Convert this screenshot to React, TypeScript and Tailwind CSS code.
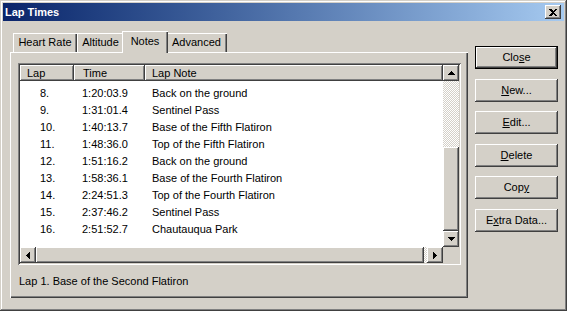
import React from "react";

const raised =
  "shadow-[inset_-1px_-1px_#404040,inset_1px_1px_#ffffff,inset_-2px_-2px_#808080,inset_2px_2px_#d4d0c8]";

const laps = [
  ["8.", "1:20:03.9", "Back on the ground"],
  ["9.", "1:31:01.4", "Sentinel Pass"],
  ["10.", "1:40:13.7", "Base of the Fifth Flatiron"],
  ["11.", "1:48:36.0", "Top of the Fifth Flatiron"],
  ["12.", "1:51:16.2", "Back on the ground"],
  ["13.", "1:58:36.1", "Base of the Fourth Flatiron"],
  ["14.", "2:24:51.3", "Top of the Fourth Flatiron"],
  ["15.", "2:37:46.2", "Sentinel Pass"],
  ["16.", "2:51:52.7", "Chautauqua Park"],
];

function Arrow({ dir }: { dir: "up" | "down" | "left" | "right" }) {
  const pts = {
    up: "3.5,0 7,4 0,4",
    down: "0,0 7,0 3.5,4",
    left: "4,0 4,7 0,3.5",
    right: "0,0 0,7 4,3.5",
  }[dir];
  const vertical = dir === "up" || dir === "down";
  return (
    <div className={`flex h-[16px] w-[16px] shrink-0 items-center justify-center bg-[#d4d0c8] ${raised}`}>
      <svg width={vertical ? 7 : 4} height={vertical ? 4 : 7} shapeRendering="crispEdges">
        <polygon points={pts} fill="#000" />
      </svg>
    </div>
  );
}

function Button({ label, u, def }: { label: string; u: number; def?: boolean }) {
  return (
    <div
      className={`flex h-[23px] w-[83px] items-center justify-center bg-[#d4d0c8] ${
        def
          ? "shadow-[inset_0_0_0_1px_#000000,inset_-2px_-2px_#404040,inset_2px_2px_#ffffff,inset_-3px_-3px_#808080]"
          : raised
      }`}
    >
      <span>
        {label.slice(0, u)}
        <span className="underline underline-offset-1">{label[u]}</span>
        {label.slice(u + 1)}
      </span>
    </div>
  );
}

function Tab({ label, w, selected }: { label: string; w: string; selected?: boolean }) {
  return (
    <div
      className={`flex items-center justify-center bg-[#d4d0c8] shadow-[inset_1px_1px_#ffffff,inset_-1px_0_#404040,inset_-2px_0_#808080] ${w} ${
        selected ? "relative z-10 -mx-[2px] -mb-px h-[22px] pb-[1px]" : "h-[19px]"
      }`}
    >
      {label}
    </div>
  );
}

export default function App() {
  return (
    <div className="flex h-[311px] w-[567px] flex-col bg-[#d4d0c8] p-[3px] font-['Liberation_Sans',Arial,sans-serif] text-[11px] leading-[13px] text-black shadow-[inset_-1px_-1px_#404040,inset_1px_1px_#d4d0c8,inset_-2px_-2px_#808080,inset_2px_2px_#ffffff]">
      {/* title bar */}
      <div className="flex h-[18px] shrink-0 items-center justify-between bg-linear-to-r from-[#0a246a] to-[#a6caf0]">
        <span className="pl-[2px] font-bold text-white">Lap Times</span>
        <div className={`mr-[3px] flex h-[14px] w-[16px] items-center justify-center bg-[#d4d0c8] ${raised}`}>
          <svg width="8" height="7" viewBox="0 0 8 7" shapeRendering="crispEdges">
            <path d="M0 0h2l2 2 2-2h2L5 3.5 8 7H6L4 5 2 7H0l3-3.5z" fill="#000" />
          </svg>
        </div>
      </div>

      <div className="flex flex-1 pl-[7px]">
        {/* tab control */}
        <div className="mt-[10px] flex flex-col">
          <div className="flex h-[21px] items-end pl-[3px]">
            <Tab label="Heart Rate" w="w-[64px]" />
            <Tab label="Altitude" w="w-[47px]" />
            <Tab label="Notes" w="w-[46px]" selected />
            <Tab label="Advanced" w="w-[61px]" />
          </div>
          <div className="h-[246px] w-[458px] pl-[8px] pt-[11px] shadow-[inset_1px_1px_#ffffff,inset_-1px_-1px_#404040,inset_-2px_-2px_#808080]">
            {/* list view */}
            <div className="flex h-[202px] w-[443px] flex-col bg-white p-[2px] shadow-[inset_1px_1px_#808080,inset_-1px_-1px_#ffffff,inset_2px_2px_#404040,inset_-2px_-2px_#d4d0c8]">
              <div className="flex h-[182px]">
                <div className="flex w-[423px] flex-col">
                  <div className="flex h-[16px] leading-[16px]">
                    <div className={`w-[54px] bg-[#d4d0c8] pl-[7px] ${raised}`}>Lap</div>
                    <div className={`w-[71px] bg-[#d4d0c8] pl-[9px] ${raised}`}>Time</div>
                    <div className={`flex-1 bg-[#d4d0c8] pl-[7px] ${raised}`}>Lap Note</div>
                  </div>
                  <div className="pt-[4px]">
                    {laps.map(([n, t, note]) => (
                      <div key={n} className="flex h-[17px] leading-[17px]">
                        <div className="w-[54px] pl-[20px]">{n}</div>
                        <div className="w-[71px] pl-[8px]">{t}</div>
                        <div className="flex-1 pl-[7px]">{note}</div>
                      </div>
                    ))}
                  </div>
                </div>
                {/* vertical scrollbar */}
                <div className="flex w-[16px] flex-col">
                  <Arrow dir="up" />
                  <div className="h-[66px] bg-[repeating-conic-gradient(#d4d0c8_0_25%,#ffffff_0_50%)] bg-size-[2px_2px]" />
                  <div className={`flex-1 bg-[#d4d0c8] ${raised}`} />
                  <Arrow dir="down" />
                </div>
              </div>
              {/* horizontal scrollbar */}
              <div className="flex h-[16px]">
                <Arrow dir="left" />
                <div className={`w-[388px] bg-[#d4d0c8] ${raised}`} />
                <div className="w-[3px] bg-[repeating-conic-gradient(#d4d0c8_0_25%,#ffffff_0_50%)] bg-size-[2px_2px]" />
                <Arrow dir="right" />
                <div className="flex-1 bg-[#d4d0c8]" />
              </div>
            </div>
            <div className="mt-[10px] pl-[1px]">Lap 1. Base of the Second Flatiron</div>
          </div>
        </div>

        {/* buttons */}
        <div className="ml-[7px] flex flex-col pt-[25px]">
          <Button label="Close" u={3} def />
          <div className="mt-[10px]">
            <Button label="New..." u={0} />
          </div>
          <div className="mt-[9px]">
            <Button label="Edit..." u={0} />
          </div>
          <div className="mt-[10px]">
            <Button label="Delete" u={0} />
          </div>
          <div className="mt-[9px]">
            <Button label="Copy" u={3} />
          </div>
          <div className="mt-[10px]">
            <Button label="Extra Data..." u={1} />
          </div>
        </div>
      </div>
    </div>
  );
}
